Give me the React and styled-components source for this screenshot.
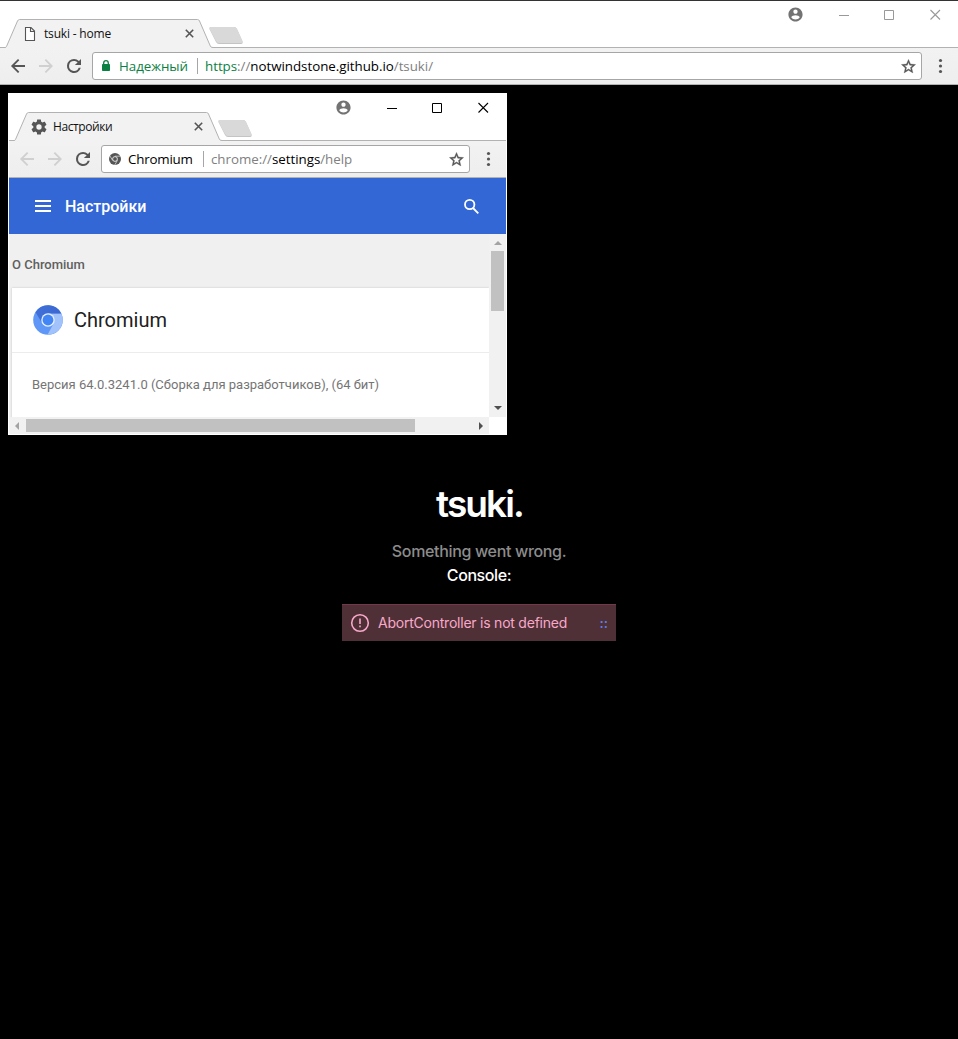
import React from 'react';
import styled, { createGlobalStyle } from 'styled-components';

const GlobalStyle = createGlobalStyle`
  * { box-sizing: border-box; }
  body { margin: 0; background: #000; }
`;

const uiFont = `"Open Sans", "Noto Sans", sans-serif`;

const Page = styled.div`
  height: 1039px;
  display: flex;
  flex-direction: column;
  overflow: hidden;
  background: #000;
  border-top: 1px solid #333;
`;

const Strip = styled.div`
  display: flex;
  justify-content: space-between;
  height: 47px;
  flex: none;
  padding-left: 6px;
  background: #fff;
  border-bottom: 1px solid #b2b2b2;
`;

const Tabs = styled.div`
  display: flex;
  align-items: flex-end;
  height: 47px;
`;

const Tab = styled.div`
  position: relative;
  display: flex;
  align-items: center;
  width: 206px;
  height: 29px;
  padding: 0 18.5px 0 16px;
`;

const TabShape = styled.svg`
  position: absolute;
  inset: 0;
  overflow: visible;
`;

const TabIcon = styled.svg`
  position: relative;
  flex: none;
`;

const TabTitle = styled.span`
  position: relative;
  flex: 1;
  margin-left: 6px;
  font: 12px/16px ${uiFont};
  letter-spacing: ${p => p.$spacing || '0'};
  color: #111;
  white-space: nowrap;
`;

const NewTab = styled.svg`
  margin: 0 0 3px -4px;
`;

const Controls = styled.div`
  display: flex;
  height: 28px;
  align-items: center;
  padding: 0 17px 1px 0;
`;

const Control = styled.svg`
  flex: none;
  margin-right: ${p => p.$gap || 0}px;
`;

const Toolbar = styled.div`
  display: flex;
  align-items: center;
  height: 37px;
  flex: none;
  padding: 0 8px 0 7px;
  background: linear-gradient(#f2f2f2, #eeeeee);
  border-bottom: 1px solid #b2b2b2;
`;

const NavIcon = styled.svg`
  flex: none;
  margin-right: 6px;
  fill: ${p => (p.$off ? '#d0d0d0' : '#555')};
`;

const Omnibox = styled.div`
  flex: 1;
  display: flex;
  align-items: center;
  height: 28px;
  margin: 0 10px 0 1px;
  padding: 0 4.5px 0 6px;
  border: 1px solid #a6a6a6;
  border-radius: 3px;
  background: #fff;
  font: 13.35px/20px ${uiFont};
  white-space: nowrap;
`;

const Site = styled.span`
  width: ${p => p.$width}px;
  margin-left: 6px;
  color: ${p => p.$color};
  letter-spacing: ${p => p.$spacing};
`;

const Divider = styled.span`
  width: 1px;
  height: 16px;
  margin-right: 7px;
  background: #a6a6a6;
`;

const Url = styled.span`
  flex: 1;
  color: #808080;
  letter-spacing: -0.03px;
`;

const UrlPart = styled.span`
  color: ${p => p.$color};
`;

const Main = styled.main`
  flex: 1;
  display: flex;
  flex-direction: column;
  align-items: center;
  padding: 8px;
  font-family: Inter, sans-serif;
`;

const Window = styled.section`
  align-self: flex-start;
  display: flex;
  flex-direction: column;
  width: 499px;
  height: 342px;
  border: 1px solid #fff;
  background: #fff;
  font-family: Roboto, sans-serif;
`;

const AppBar = styled.header`
  display: flex;
  align-items: center;
  height: 56px;
  flex: none;
  padding: 0 26px;
  background: #3367d6;
`;

const AppTitle = styled.h1`
  flex: 1;
  margin: 0 0 0 14px;
  font-size: 16px;
  font-weight: 500;
  color: #fff;
`;

const ScrollGrid = styled.div`
  display: grid;
  grid-template: 183px 17px / 480px 17px;
`;

const Content = styled.div`
  padding: 0 0 0 3px;
  background: #f0f0f0;
  overflow: hidden;
`;

const SectionTitle = styled.h2`
  margin: 0;
  height: 54px;
  padding-top: 4px;
  font-size: 13px;
  font-weight: 500;
  line-height: 54px;
  color: #5f5f5f;
`;

const Card = styled.div`
  height: 140px;
  background: #fff;
  box-shadow: 0 0 2px rgba(0, 0, 0, 0.18);
`;

const Product = styled.div`
  display: flex;
  align-items: center;
  height: 65px;
  padding-left: 21px;
  border-bottom: 1px solid #ececec;
`;

const ProductName = styled.span`
  margin-left: 11px;
  font-size: 20px;
  color: #212121;
`;

const Version = styled.div`
  padding-left: 20px;
  font-size: 13px;
  line-height: 64px;
  color: #757575;
  white-space: nowrap;
`;

const VerticalBar = styled.div`
  display: flex;
  flex-direction: column;
  align-items: center;
  justify-content: space-between;
  padding: 7px 0;
  background: #f1f1f1;
`;

const HorizontalBar = styled.div`
  display: flex;
  align-items: center;
  justify-content: space-between;
  padding: 0 6px;
  background: #f1f1f1;
`;

const Thumb = styled.div`
  flex: none;
  width: ${p => p.$w}px;
  height: ${p => p.$h}px;
  margin: ${p => p.$margin};
  background: #c1c1c1;
`;

const Brand = styled.h1`
  margin: 45px 0 0;
  height: 48px;
  font-size: 37px;
  font-weight: 600;
  line-height: 48px;
  letter-spacing: -1.9px;
  text-indent: 1px;
  color: #fff;
`;

const Message = styled.p`
  margin: ${p => p.$top || 0}px 0 0;
  font-size: 16px;
  font-weight: 500;
  line-height: 24px;
  letter-spacing: ${p => p.$spacing || '0'};
  color: ${p => p.$color};
`;

const ErrorRow = styled.div`
  display: flex;
  align-items: center;
  width: 274px;
  height: 37px;
  margin-top: 17px;
  padding: 0 8px;
  border-top: 1px solid #73384a;
  background: #4e3036;
`;

const ErrorText = styled.span`
  flex: 1;
  margin: 0 0 2px 8px;
  font-size: 14px;
  letter-spacing: -0.23px;
  color: #f9a8c9;
  white-space: nowrap;
`;

const SourceLink = styled.a`
  margin-bottom: 2px;
  font-size: 14px;
  font-weight: 500;
  color: #5f80f0;
`;

function BrowserChrome({ icon, title, titleSpacing, active, siteIcon, site, siteColor, siteWidth, siteSpacing, canGoBack, url }) {
  const ink = active ? '#000' : '#999';
  return (
    <>
      <Strip>
        <Tabs>
          <Tab>
            <TabShape width="206" height="29">
              <path d="M-1 29V28.500Q0 28.500 .5 27.500L11.500 2Q12.300 .5 13.500 .5H191.500Q192.900 .5 193.500 2L204.300 27Q204.900 28.500 207 28.500V29Z" fill="#f2f2f2" />
              <path d="M-1 28.500Q0 28.500 .5 27.500L11.500 2Q12.300 .5 13.500 .5H191.500Q192.900 .5 193.500 2L204.300 27Q204.900 28.500 207 28.500" fill="none" stroke="#b2b2b2" />
            </TabShape>
            {icon}
            <TabTitle $spacing={titleSpacing}>{title}</TabTitle>
            <TabIcon width="9" height="9" viewBox="0 0 9 9">
              <path d="M.8 .8l7.400 7.400M8.200 .8L.8 8.200" stroke="#555" strokeWidth="1.600" />
            </TabIcon>
          </Tab>
          <NewTab width="36" height="19">
            <path d="M3 1H26Q28 1 29 3L34.500 15.500Q35 18 33 18H11Q9 18 8 16L1.500 3Q1 1 3 1Z" fill="#c4c4c4" />
            <path d="M3 1H26Q28 1 29 3L34.500 15Q35 17 33 17H11Q9 17 8 15L1.500 3Q1 1 3 1Z" fill="#d9d9d9" />
          </NewTab>
        </Tabs>
        <Controls>
          <Control $gap={35} width="17" height="17" viewBox="0 0 24 24">
            <path fill="#737373" d="M12 2C6.480 2 2 6.480 2 12s4.480 10 10 10 10-4.480 10-10S17.520 2 12 2zm0 3c1.660 0 3 1.340 3 3s-1.340 3-3 3-3-1.340-3-3 1.340-3 3-3zm0 14.200c-2.500 0-4.710-1.280-6-3.220.03-1.990 4-3.080 6-3.080 1.990 0 5.970 1.090 6 3.080-1.290 1.940-3.500 3.220-6 3.220z" />
          </Control>
          <Control $gap={34} width="11" height="11"><path d="M0 6.500h10" stroke={ink} /></Control>
          <Control $gap={35} width="11" height="11"><path d="M.5 1.500h9v9h-9z" fill="none" stroke={ink} /></Control>
          <Control width="11" height="11"><path d="M.5 1l9.500 9.500M10 1L.5 10.500" stroke={ink} strokeWidth="1.100" /></Control>
        </Controls>
      </Strip>
      <Toolbar>
        <NavIcon $off={!canGoBack} width="22" height="22" viewBox="-.57 -.57 25.140 25.140">
          <path d="M20 10.800H8.100l5.400-5.300L12 4l-8 8 8 8 1.500-1.500-5.400-5.300H20z" />
        </NavIcon>
        <NavIcon $off width="22" height="22" viewBox="-.57 -.57 25.140 25.140">
          <path d="M4 10.800h11.900l-5.400-5.300L12 4l8 8-8 8-1.500-1.500 5.400-5.300H4z" />
        </NavIcon>
        <NavIcon width="22" height="22" viewBox="-.57 -.57 25.140 25.140">
          <path d="M17.650 6.350A7.960 7.960 0 0 0 12 4a8 8 0 1 0 7.730 10h-2.400A5.700 5.700 0 1 1 12 6.200c1.600 0 3.050.66 4.100 1.700L13 11h7V4z" />
        </NavIcon>
        <Omnibox>
          {siteIcon}
          <Site $color={siteColor} $width={siteWidth} $spacing={siteSpacing}>{site}</Site>
          <Divider />
          <Url>{url}</Url>
          <svg width="17" height="17" viewBox="0 0 24 24">
            <path fill="#555" stroke="#555" strokeWidth=".5" d="M22 9.240l-7.190-.62L12 2 9.190 8.630 2 9.240l5.460 4.730L5.820 21 12 17.270 18.180 21l-1.630-7.030L22 9.240zM12 15.400l-3.760 2.270 1-4.280-3.320-2.880 4.380-.38L12 6.100l1.710 4.040 4.380.38-3.320 2.880 1 4.280L12 15.400z" />
          </svg>
        </Omnibox>
        <svg width="18" height="18" viewBox="0 0 18 18" fill="#555">
          <circle cx="8.500" cy="3.500" r="1.600" /><circle cx="8.500" cy="9" r="1.600" /><circle cx="8.500" cy="14.500" r="1.600" />
        </svg>
      </Toolbar>
    </>
  );
}

const PageIcon = (
  <TabIcon width="16" height="16" viewBox="0 0 16 16">
    <path d="M3.500 1.500h5.500l3.500 3.500v9.500h-9zM8.500 1.500V5.500h4" fill="#fff" stroke="#555" strokeWidth="1.100" />
  </TabIcon>
);

const GearIcon = (
  <TabIcon width="16" height="16" viewBox="1.500 1.500 21 21">
    <path fill="#555" d="M19.430 12.980c.04-.32.07-.64.07-.98s-.03-.66-.07-.98l2.110-1.650c.19-.15.24-.42.12-.64l-2-3.460c-.12-.22-.39-.3-.61-.22l-2.490 1c-.52-.4-1.080-.73-1.690-.98l-.38-2.650C14.460 2.180 14.250 2 14 2h-4c-.25 0-.46.18-.49.42l-.38 2.650c-.61.25-1.170.59-1.690.98l-2.490-1c-.23-.09-.49 0-.61.22l-2 3.460c-.13.22-.07.49.12.64l2.110 1.650c-.04.32-.07.65-.07.98s.03.66.07.98l-2.110 1.650c-.19.15-.24.42-.12.64l2 3.460c.12.22.39.3.61.22l2.490-1c.52.4 1.080.73 1.690.98l.38 2.650c.03.24.24.42.49.42h4c.25 0 .46-.18.49-.42l.38-2.650c.61-.25 1.170-.59 1.690-.98l2.490 1c.23.09.49 0 .61-.22l2-3.460c.12-.22.07-.49-.12-.64l-2.110-1.650zM12 15.500a3.500 3.500 0 1 1 0-7 3.500 3.500 0 0 1 0 7z" />
  </TabIcon>
);

const LockIcon = (
  <svg width="14" height="14" viewBox="0 0 14 14">
    <rect x="3" y="5" width="8" height="7" rx=".8" fill="#0b8043" />
    <path d="M4.700 5.500V4a2.300 2.300 0 0 1 4.600 0v1.500" fill="none" stroke="#0b8043" strokeWidth="1.300" />
  </svg>
);

const ChromeMark = (
  <svg width="14" height="14" viewBox="0 0 14 14">
    <circle cx="7" cy="7" r="6" fill="#555" />
    <path d="M7 4.200h5.500M4.600 8.400L1.800 3.700M9.400 8.400L6.700 13" stroke="#fff" strokeWidth=".6" />
    <circle cx="7" cy="7" r="2.400" fill="#555" stroke="#fff" strokeWidth=".8" />
  </svg>
);

function ChromiumLogo() {
  return (
    <svg width="30" height="30" viewBox="0 0 31 31">
      <defs>
        <linearGradient id="shade" x1="0" y1="0" x2="1" y2="0">
          <stop offset="0" stopColor="#3f70d8" />
          <stop offset="1" stopColor="#3b68d0" />
        </linearGradient>
      </defs>
      <circle cx="15.500" cy="15.500" r="15.300" fill="#5e97f6" />
      <path d="M15.500 8.700H29.200A15.300 15.300 0 0 1 15 30.800L21.400 18.900z" fill="#a1c2fa" />
      <path d="M2.600 7.400A15.300 15.300 0 0 1 29.200 8.700H15.500L9.600 18.900z" fill="url(#shade)" />
      <circle cx="15.500" cy="15.500" r="7" fill="#e8f0fe" />
      <circle cx="15.500" cy="15.500" r="5.600" fill="#4285f4" />
    </svg>
  );
}

function Arrow({ direction, muted }) {
  const shapes = {
    up: 'M0 4L4 0L8 4z', down: 'M0 0h8L4 4z',
    left: 'M4 0v8L0 4z', right: 'M0 0v8L4 4z',
  };
  const upright = direction === 'left' || direction === 'right';
  return (
    <svg width={upright ? 4 : 8} height={upright ? 8 : 4}>
      <path d={shapes[direction]} fill={muted ? '#a3a3a3' : '#505050'} />
    </svg>
  );
}

export default function App() {
  return (
    <Page>
      <GlobalStyle />
      <BrowserChrome
        icon={PageIcon}
        title="tsuki - home"
        titleSpacing="-0.18px"
        siteIcon={LockIcon}
        site="Надежный"
        siteColor="#0b8043"
        siteWidth={78}
        siteSpacing="-0.05px"
        canGoBack
        url={<><UrlPart $color="#0b8043">https</UrlPart>://<UrlPart $color="#000">notwindstone.github.io</UrlPart>/tsuki/</>}
      />
      <Main>
        <Window>
          <BrowserChrome
            active
            icon={GearIcon}
            title="Настройки"
            titleSpacing="-0.4px"
            siteIcon={ChromeMark}
            site="Chromium"
            siteColor="#000"
            siteWidth={75}
            siteSpacing="-0.2px"
            url={<>chrome://<UrlPart $color="#000">settings</UrlPart>/help</>}
          />
          <AppBar>
            <svg width="16" height="12"><path d="M0 1h16M0 6h16M0 11h16" stroke="#fff" strokeWidth="2" /></svg>
            <AppTitle>Настройки</AppTitle>
            <svg width="17" height="17" viewBox="0 0 17 17" fill="none" stroke="#fff" strokeWidth="1.800">
              <circle cx="6.700" cy="6.500" r="4.700" /><path d="M10 10l5.300 5.300" />
            </svg>
          </AppBar>
          <ScrollGrid>
            <Content>
              <SectionTitle>О Chromium</SectionTitle>
              <Card>
                <Product>
                  <ChromiumLogo />
                  <ProductName>Chromium</ProductName>
                </Product>
                <Version>Версия 64.0.3241.0 (Сборка для разработчиков), (64 бит)</Version>
              </Card>
            </Content>
            <VerticalBar>
              <Arrow direction="up" muted />
              <Thumb $w={13} $h={60} $margin="6px 0 auto" />
              <Arrow direction="down" />
            </VerticalBar>
            <HorizontalBar>
              <Arrow direction="left" muted />
              <Thumb $w={389} $h={13} $margin="0 auto 0 7px" />
              <Arrow direction="right" />
            </HorizontalBar>
          </ScrollGrid>
        </Window>
        <Brand>tsuki.</Brand>
        <Message $top={11} $spacing="-0.34px" $color="#8c8c8c">Something went wrong.</Message>
        <Message $spacing="-0.4px" $color="#fff">Console:</Message>
        <ErrorRow>
          <svg width="20" height="20" viewBox="0 0 20 20" fill="none" stroke="#f9a8c9" strokeWidth="1.600">
            <circle cx="10" cy="10" r="8.300" /><path d="M10 5.500v5.500M10 12.500v1.800" />
          </svg>
          <ErrorText>AbortController is not defined</ErrorText>
          <SourceLink>::</SourceLink>
        </ErrorRow>
      </Main>
    </Page>
  );
}
